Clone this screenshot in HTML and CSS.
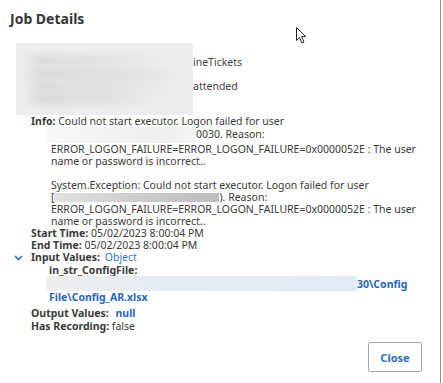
FILE: index.html
```html
<!DOCTYPE html>
<html lang="en">

<head>
    <meta charset="UTF-8">
    <title>Job Details</title>
    <link rel="stylesheet" href="styles.css">
</head>

<body>

    <div class="modal">
        <h2 class="modal-title">Job Details</h2>

        <div class="summary">
            <div class="redact-box"><div class="redact-blur"></div></div>
            <div class="summary-lines">
                <div>ineTickets</div>
                <div>attended</div>
            </div>
        </div>

        <div class="details">
            <div class="row">
                <b>Info:</b> Could not start executor. Logon failed for user<br>
                <span class="redact-line"></span>0030. Reason:<br>
                ERROR_LOGON_FAILURE=ERROR_LOGON_FAILURE=0x0000052E : The user<br>
                name or password is incorrect..<br>
                <br>
                System.Exception: Could not start executor. Logon failed for user<br>
                [<span class="redact-bar"></span>). Reason:<br>
                ERROR_LOGON_FAILURE=ERROR_LOGON_FAILURE=0x0000052E : The user<br>
                name or password is incorrect..
            </div>
            <div class="row"><b>Start Time:</b> 05/02/2023 8:00:04 PM</div>
            <div class="row"><b>End Time:</b> 05/02/2023 8:00:04 PM</div>

            <div class="row input-row">
                <svg class="chevron" width="9" height="6" viewBox="0 0 9 6">
                    <path d="M1 1 L4.5 4.5 L8 1" fill="none" stroke="#2a6fc4" stroke-width="1.6"/>
                </svg>
                <b>Input Values:</b> <span class="link">Object</span>
            </div>
            <div class="param">
                <div class="param-name">in_str_ConfigFile:</div>
                <div class="param-value">
                    <span class="redact-path"></span>30\Config<br>
                    File\Config_AR.xlsx
                </div>
            </div>

            <div class="row output-row"><b>Output Values:</b> <span class="value">null</span></div>
            <div class="row"><b>Has Recording:</b> false</div>
        </div>

        <div class="modal-footer">
            <button class="btn">Close</button>
        </div>
    </div>

    <svg class="cursor" width="13" height="19" viewBox="0 0 13 19">
        <path d="M1.5 1.5 L1.5 14.5 L4.5 11.5 L7 17 L9 16 L6.6 10.6 L10.8 10.6 Z" fill="#fff" stroke="#222" stroke-width="1" stroke-linejoin="round"/>
    </svg>

</body>

</html>
```

FILE: styles.css
```css
body {
    margin: 0;
    background-color: #fff;
    font-family: "Noto Sans", "Open Sans", sans-serif;
    color: #3a3a3a;
    overflow: hidden;
}

.modal {
    width: 441px;
    height: 383px;
    border-right: 1px solid #8c8c8c;
    box-sizing: border-box;
    position: relative;
}

.modal-title {
    margin: 0;
    padding: 9px 0 0 10px;
    font-size: 14px;
    font-weight: 700;
    line-height: 20px;
    color: #363636;
}

/* top summary, partly blurred out */
.summary {
    display: flex;
    margin-top: 14px;
    margin-left: 16px;
}

.redact-box {
    width: 177px;
    height: 72px;
    overflow: hidden;
    background-color: #eeeeee;
}

.redact-blur {
    width: 100%;
    height: 100%;
    background:
        linear-gradient(to right, transparent 5%, #d2d2d2 12%, #dcdcdc 50%, transparent 85%) 0 14px / 100% 7px no-repeat,
        linear-gradient(to right, transparent 5%, #cecece 12%, #dddddd 70%, transparent 95%) 0 28px / 100% 7px no-repeat,
        linear-gradient(to right, transparent 5%, #d2d2d2 12%, #dedede 60%, transparent 90%) 0 41px / 100% 7px no-repeat,
        linear-gradient(to right, transparent 5%, #d0d0d0 12%, #dcdcdc 55%, transparent 80%) 0 53px / 100% 7px no-repeat,
        #ececec;
    filter: blur(4px);
}

.summary-lines {
    padding-top: 7px;
    font-size: 10.5px;
    line-height: 24px;
    color: #444;
}

.details {
    padding-left: 31px;
    font-size: 10.5px;
    line-height: 12px;
}

.details b {
    font-weight: 700;
    color: #3a3a3a;
}

.row {
    padding-left: 20px;
    text-indent: -20px;
}

.redact-line {
    display: inline-block;
    width: 150px;
    height: 16px;
    margin-left: -5px;
    vertical-align: -5px;
    background: linear-gradient(to right, #f7f7f7, #efefef 80%, #f6f6f6);
}

.redact-bar {
    display: inline-block;
    width: 165px;
    height: 9px;
    vertical-align: -1px;
    background: linear-gradient(to right, #e2e2e2, #c9c9c9 60%, #bdbdbd);
}

.input-row {
    position: relative;
}

.chevron {
    position: absolute;
    left: -17px;
    top: 4px;
}

.link {
    color: #2f74cc;
    margin-left: 2px;
}

.param {
    padding-left: 18px;
    margin-top: 1px;
    font-weight: 700;
}

.param-value {
    color: #1f66c4;
}

.redact-path {
    display: inline-block;
    width: 311px;
    height: 15px;
    margin-left: -3px;
    vertical-align: -3px;
    background: linear-gradient(to right, #efefef, #e6ecf3 30%, #e1ebf6);
}

.output-row {
    margin-top: 3px;
    line-height: 14px;
}

.value {
    color: #1f66c4;
    font-weight: 700;
    margin-left: 4px;
}

.modal-footer {
    display: flex;
    justify-content: flex-end;
    padding: 10px 18px 0 0;
}

.btn {
    width: 54px;
    height: 30px;
    border: 1px solid #a5a5a5;
    border-radius: 2px;
    background-color: #fff;
    font-family: "Noto Sans", sans-serif;
    font-size: 11px;
    font-weight: 700;
    color: #2a6fc4;
    cursor: pointer;
}

.cursor {
    position: absolute;
    left: 295px;
    top: 26px;
}
```
